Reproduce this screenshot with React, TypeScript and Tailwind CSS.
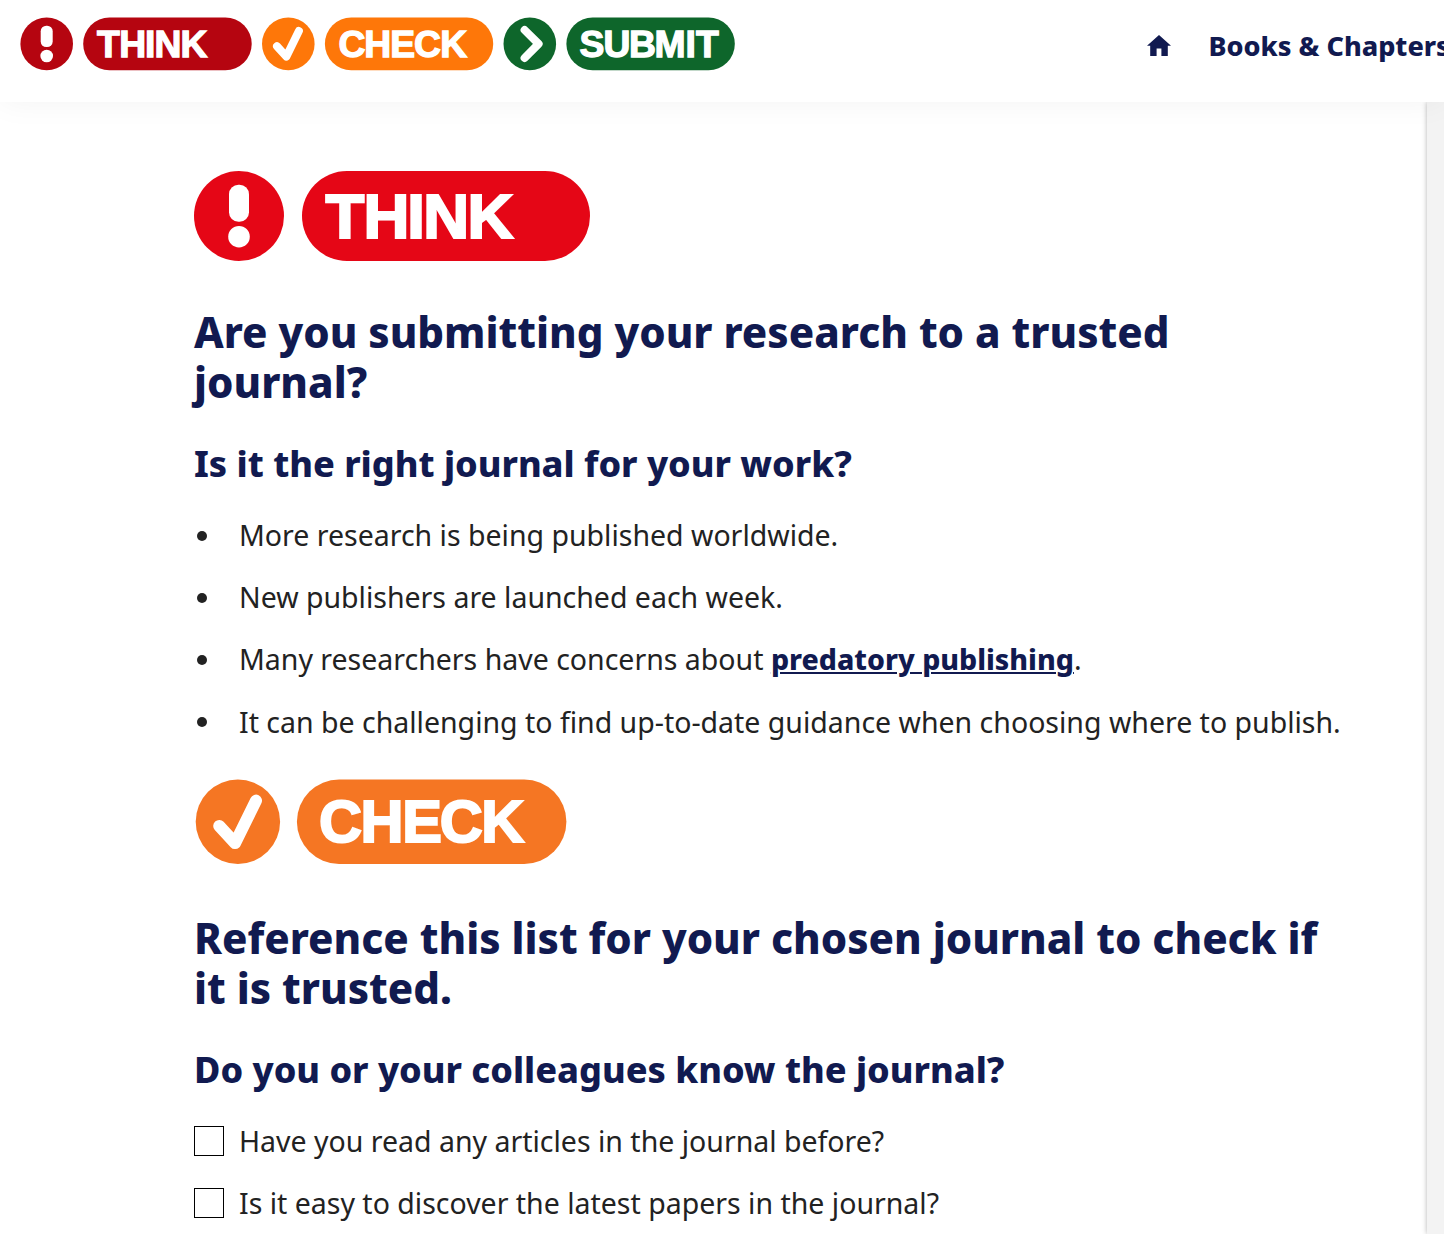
import React from "react";

const logoText = "font-['Liberation_Sans',Arial,sans-serif] font-bold fill-white stroke-white";

function HeaderLogo() {
  return (
    <svg className="block h-[60px] w-[720px] shrink-0" viewBox="17 14 720 60" role="img" aria-label="Think Check Submit">
      <g fill="#b50510">
        <circle cx="46.7" cy="43.9" r="26.3" />
        <rect x="83.2" y="17.5" width="168.5" height="52.7" rx="26.3" />
      </g>
      <rect x="40.7" y="25.7" width="12" height="21.4" rx="5.6" fill="#fff" />
      <circle cx="46.7" cy="56" r="6.3" fill="#fff" />
      <text className={logoText} fontSize="37.3" strokeWidth="1.3" x="97 119.3 145 154.6 180.6" y="56.7">THINK</text>
      <g fill="#fe7709">
        <circle cx="288.3" cy="43.9" r="26.3" />
        <rect x="324.9" y="17.5" width="168.3" height="52.7" rx="26.3" />
      </g>
      <path d="M277 46.2 286.4 56.6 298.9 31" fill="none" stroke="#fff" strokeWidth="8" strokeLinecap="round" strokeLinejoin="round" />
      <text className={logoText} fontSize="37.3" strokeWidth="1.3" x="338.6 364.2 390.2 414 440.2" y="56.7">CHECK</text>
      <g fill="#0e662b">
        <circle cx="529.8" cy="43.9" r="26.3" />
        <rect x="566.4" y="17.5" width="168.4" height="52.7" rx="26.3" />
      </g>
      <path d="M524.6 30 538.6 43.9 524.6 58" fill="none" stroke="#fff" strokeWidth="8" strokeLinecap="round" strokeLinejoin="round" />
      <text className={logoText} fontSize="37.3" strokeWidth="1.3" x="579.5 603.4 628.9 654.5 685.5 696" y="56.7">SUBMIT</text>
    </svg>
  );
}

function ThinkBadge() {
  return (
    <svg className="block h-[90px] w-[400px]" viewBox="194 171 400 90" role="img" aria-label="Think">
      <g fill="#e50616">
        <circle cx="239" cy="216" r="45" />
        <rect x="302" y="171" width="288" height="90" rx="45" />
      </g>
      <rect x="229" y="184.7" width="20" height="37" rx="9.5" fill="#fff" />
      <circle cx="239" cy="236.7" r="10.8" fill="#fff" />
      <text className={logoText} fontSize="63.5" strokeWidth="2.2" x="325.6 363.6 407.3 423.2 467.5" y="238">THINK</text>
    </svg>
  );
}

function CheckBadge() {
  return (
    <svg className="block h-[86px] w-[400px]" viewBox="194 779 400 86" role="img" aria-label="Check">
      <g fill="#f57623">
        <circle cx="237.9" cy="821.7" r="42.2" />
        <rect x="296.9" y="779.5" width="269.5" height="84.4" rx="42.2" />
      </g>
      <path d="M219.2 825.9 235.1 843.1 256 800.6" fill="none" stroke="#fff" strokeWidth="12" strokeLinecap="round" strokeLinejoin="round" />
      <text className={logoText} fontSize="59.5" strokeWidth="2.1" x="319 360.5 402.2 439.8 481.3" y="842">CHECK</text>
    </svg>
  );
}

function Bullet({ children }: { children: React.ReactNode }) {
  return (
    <li className="flex h-[42px] items-center whitespace-nowrap">
      <span className="ml-[3px] mr-[32px] mt-px size-[10px] rounded-full bg-[#222]" />
      <span>{children}</span>
    </li>
  );
}

function CheckItem({ children }: { children: React.ReactNode }) {
  return (
    <label className="flex h-[42px] items-center whitespace-nowrap">
      <input type="checkbox" className="mr-[15px] size-[30px] appearance-none border border-black bg-white" />
      <span>{children}</span>
    </label>
  );
}

export default function App() {
  return (
    <div className="flex h-[1234px] w-[1444px] flex-col overflow-hidden bg-white font-['Noto_Sans',sans-serif] text-[28.49px] leading-[42px] text-[#222]">
      <header className="relative z-10 flex h-[102px] shrink-0 bg-white pl-[17px] pt-[14px] shadow-[0_0_30px_rgba(0,0,0,0.05)]">
        <HeaderLogo />
        <nav className="ml-[410px] flex h-[64px] items-center whitespace-nowrap text-[27px] font-extrabold text-[#111a50]">
          <svg className="mr-[37.5px] mt-[-2px] block h-[21px] w-[24px] shrink-0" viewBox="0 0 24 21">
            <path d="M12 0 24 10.7H20.8V21H14.4V13.5H9.6V21H3.2V10.7H0Z" fill="#111a50" />
          </svg>
          <a>Books &amp; Chapters</a>
        </nav>
      </header>
      <div className="flex grow">
        <main className="w-[1427px] shrink-0 bg-white pl-[194px] pt-[69px]">
          <ThinkBadge />
          <h1 className="mt-[46px] w-[1150px] text-[42px] font-extrabold leading-[50px] text-[#111a50]">
            Are you submitting your research to a trusted<br />journal?
          </h1>
          <h2 className="mt-[35px] text-[36px] font-extrabold leading-[44px] text-[#111a50]">Is it the right journal for your work?</h2>
          <ul className="mt-[28px] flex flex-col gap-[20.2px]">
            <Bullet>More research is being published worldwide.</Bullet>
            <Bullet>New publishers are launched each week.</Bullet>
            <Bullet>
              Many researchers have concerns about <a className="font-extrabold text-[#111a50] underline decoration-[2px] underline-offset-[2px]">predatory publishing</a>.
            </Bullet>
            <Bullet>It can be challenging to find up-to-date guidance when choosing where to publish.</Bullet>
          </ul>
          <div className="mt-[36.4px]">
            <CheckBadge />
          </div>
          <h1 className="mt-[48px] w-[1150px] text-[42px] font-extrabold leading-[50px] text-[#111a50]">
            Reference this list for your chosen journal to check if<br />it is trusted.
          </h1>
          <h2 className="mt-[35px] text-[36px] font-extrabold leading-[44px] text-[#111a50]">Do you or your colleagues know the journal?</h2>
          <div className="mt-[28px] flex flex-col gap-[20px]">
            <CheckItem>Have you read any articles in the journal before?</CheckItem>
            <CheckItem>Is it easy to discover the latest papers in the journal?</CheckItem>
          </div>
        </main>
        <aside className="grow bg-[#f3f3f3] shadow-[0_0_5px_rgba(0,0,0,0.3)]" />
      </div>
    </div>
  );
}
